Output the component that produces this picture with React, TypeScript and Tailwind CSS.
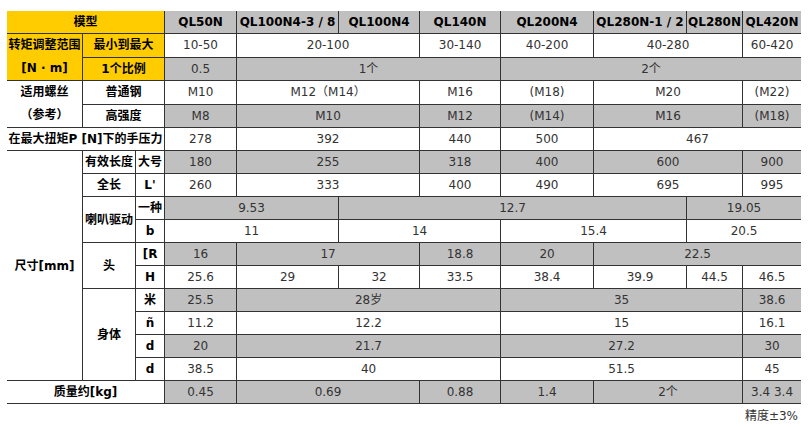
type Tone = 'y' | 'g' | 'w';

interface Cell {
  t: string;
  cs?: number;
  rs?: number;
  tone: Tone;
  label?: boolean;
  end?: boolean;
  lines?: string[];
}

const Y: Tone = 'y';
const G: Tone = 'g';
const W: Tone = 'w';

const v = (t: string, tone: Tone, cs = 1, end = false): Cell => ({ t, tone, cs, end });
const l = (t: string, tone: Tone, cs = 1, rs = 1): Cell => ({ t, tone, cs, rs, label: true });

const rows: Cell[][] = [
  [
    { t: '模型', tone: Y, cs: 3, label: true },
    { t: 'QL50N', tone: G, label: true },
    { t: 'QL100N4-3 / 8', tone: G, label: true },
    { t: 'QL100N4', tone: G, label: true },
    { t: 'QL140N', tone: G, label: true },
    { t: 'QL200N4', tone: G, label: true },
    { t: 'QL280N-1 / 2', tone: G, label: true },
    { t: 'QL280N', tone: G, label: true },
    { t: 'QL420N', tone: G, label: true, end: true },
  ],
  [
    { t: '', lines: ['转矩调整范围', '[N · m]'], tone: Y, rs: 2, label: true },
    l('最小到最大', Y, 2),
    v('10-50', W),
    v('20-100', W, 2),
    v('30-140', W),
    v('40-200', W),
    v('40-280', W, 2),
    v('60-420', W, 1, true),
  ],
  [l('1个比例', Y, 2), v('0.5', G), v('1个', G, 3), v('2个', G, 4, true)],
  [
    { t: '', lines: ['适用螺丝', '（参考）'], tone: W, rs: 2, label: true },
    l('普通钢', W, 2),
    v('M10', W),
    v('M12（M14）', W, 2),
    v('M16', W),
    v('(M18)', W),
    v('M20', W, 2),
    v('(M22)', W, 1, true),
  ],
  [
    l('高强度', W, 2),
    v('M8', G),
    v('M10', G, 2),
    v('M12', G),
    v('(M14)', G),
    v('M16', G, 2),
    v('(M18)', G, 1, true),
  ],
  [
    l('在最大扭矩P [N]下的手压力', W, 3),
    v('278', W),
    v('392', W, 2),
    v('440', W),
    v('500', W),
    v('467', W, 3, true),
  ],
  [
    l('尺寸[mm]', W, 1, 10),
    l('有效长度', W),
    l('大号', W),
    v('180', G),
    v('255', G, 2),
    v('318', G),
    v('400', G),
    v('600', G, 2),
    v('900', G, 1, true),
  ],
  [
    l('全长', W),
    l("L'", W),
    v('260', W),
    v('333', W, 2),
    v('400', W),
    v('490', W),
    v('695', W, 2),
    v('995', W, 1, true),
  ],
  [l('喇叭驱动', W, 1, 2), l('一种', W), v('9.53', G, 2), v('12.7', G, 4), v('19.05', G, 2, true)],
  [l('b', W), v('11', W, 2), v('14', W, 2), v('15.4', W, 2), v('20.5', W, 2, true)],
  [
    l('头', W, 1, 2),
    l('[R', W),
    v('16', G),
    v('17', G, 2),
    v('18.8', G),
    v('20', G),
    v('22.5', G, 3, true),
  ],
  [
    l('H', W),
    v('25.6', W),
    v('29', W),
    v('32', W),
    v('33.5', W),
    v('38.4', W),
    v('39.9', W),
    v('44.5', W),
    v('46.5', W, 1, true),
  ],
  [l('身体', W, 1, 4), l('米', W), v('25.5', G), v('28岁', G, 3), v('35', G, 3), v('38.6', G, 1, true)],
  [l('ñ', W), v('11.2', W), v('12.2', W, 3), v('15', W, 3), v('16.1', W, 1, true)],
  [l('d', W), v('20', G), v('21.7', G, 3), v('27.2', G, 3), v('30', G, 1, true)],
  [l('d', W), v('38.5', W), v('40', W, 3), v('51.5', W, 3), v('45', W, 1, true)],
  [
    l('质量约[kg]', W, 3),
    v('0.45', G),
    v('0.69', G, 2),
    v('0.88', G),
    v('1.4', G),
    v('2个', G, 2),
    v('3.4 3.4', G, 1, true),
  ],
];

const colWidths = [76, 53, 29, 72, 102, 81, 81, 93, 93, 56, 58];

const toneClass: Record<Tone, string> = {
  y: 'bg-[#ffcc00]',
  g: 'bg-[#c0c0c0]',
  w: 'bg-white',
};

export default function App() {
  return (
    <div className="bg-white w-[812px] h-[427px] pt-[11px] pl-[7px] font-['DejaVu_Sans','Noto_Sans_CJK_SC',sans-serif] text-[12px]">
      <table className="table-fixed w-[794px] border-separate border-spacing-0">
        <colgroup>
          {colWidths.map((w, i) => (
            <col key={i} style={{ width: w }} />
          ))}
        </colgroup>
        <tbody>
          {rows.map((row, ri) => (
            <tr key={ri}>
              {row.map((c, ci) => (
                <td
                  key={ci}
                  colSpan={c.cs ?? 1}
                  rowSpan={c.rs ?? 1}
                  className={`h-[23px] p-0 text-center align-middle whitespace-nowrap overflow-hidden border-b border-[#333] leading-[22px] ${
                    c.end ? '' : 'border-r'
                  } ${toneClass[c.tone]} ${c.label ? 'font-bold text-black' : 'text-[#333]'}`}
                >
                  {c.lines ? (
                    <div className="flex flex-col">
                      {c.lines.map((s) => (
                        <span key={s} className="h-[23px] leading-[23px]">
                          {s}
                        </span>
                      ))}
                    </div>
                  ) : (
                    c.t
                  )}
                </td>
              ))}
            </tr>
          ))}
        </tbody>
      </table>
      <div className="w-[791px] text-right text-[#333] mt-[4px] leading-[16px]">精度±3%</div>
    </div>
  );
}
